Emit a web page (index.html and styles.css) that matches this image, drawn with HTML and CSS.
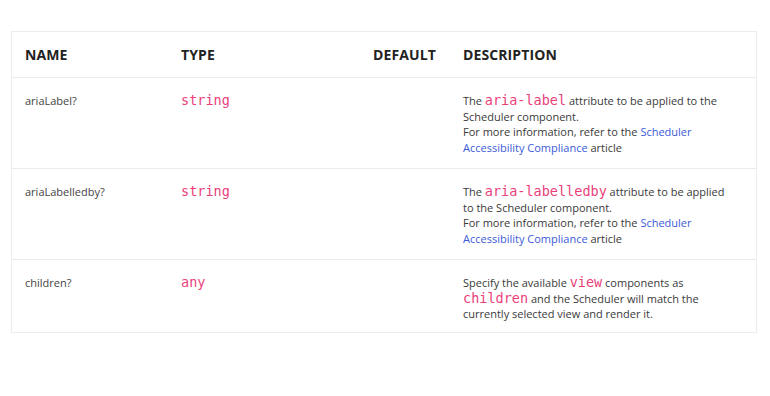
FILE: index.html
```html
<!DOCTYPE html>
<html>
<head>
<meta charset="utf-8">
<link rel="stylesheet" href="styles.css">
</head>
<body>
<div class="frame">
<table class="api">
<colgroup><col class="c-name"><col class="c-type"><col class="c-def"><col class="c-desc"></colgroup>
<thead>
<tr><th>Name</th><th>Type</th><th>Default</th><th>Description</th></tr>
</thead>
<tbody>
<tr>
<td class="name">ariaLabel?</td>
<td><code class="type">string</code></td>
<td></td>
<td class="desc">The <code>aria-label</code> attribute to be applied to the Scheduler component.<br>For more information, refer to the <a href="#">Scheduler Accessibility Compliance</a> article</td>
</tr>
<tr>
<td class="name">ariaLabelledby?</td>
<td><code class="type">string</code></td>
<td></td>
<td class="desc">The <code>aria-labelledby</code> attribute to be applied to the Scheduler component.<br>For more information, refer to the <a href="#">Scheduler Accessibility Compliance</a> article</td>
</tr>
<tr class="last">
<td class="name">children?</td>
<td><code class="type">any</code></td>
<td></td>
<td class="desc">Specify the available <code>view</code> components as <code>children</code> and the Scheduler will match the currently selected view and render it.</td>
</tr>
</tbody>
</table>
</div>
</body>
</html>
```
FILE: styles.css
```css
html, body { margin: 0; padding: 0; background: #fff; }
body {
  padding: 31px 11px 0 11px;
  font-family: "Open Sans", "Noto Sans", sans-serif;
  color: #3a3a3a;
}
.frame {
  width: 746px;
  height: 302px;
  overflow: hidden;
  border: 1px solid #ececec;
  box-sizing: border-box;
}
.api {
  width: 100%;
  border-collapse: collapse;
  table-layout: fixed;
}
.c-name { width: 156px; }
.c-type { width: 192px; }
.c-def { width: 90px; }
.api th {
  text-align: left;
  text-transform: uppercase;
  font-size: 14px;
  font-weight: 700;
  color: #222;
  height: 45px;
  padding: 0 0 0 13px;
  vertical-align: middle;
  border-bottom: 1px solid #ececec;
  letter-spacing: 0.1px;
}
.api td {
  vertical-align: top;
  padding: 15px 20px 12px 13px;
  font-size: 11px;
  line-height: 15.7px;
  border-bottom: 1px solid #ececec;
}
.api tbody tr { height: 91px; }
.api td.name { color: #444; }
.api code {
  font-family: "DejaVu Sans Mono", monospace;
  font-size: 13.5px;
  line-height: 1;
  color: #ea3f7b;
}
.api a { color: #3a5bd9; text-decoration: none; }
```
